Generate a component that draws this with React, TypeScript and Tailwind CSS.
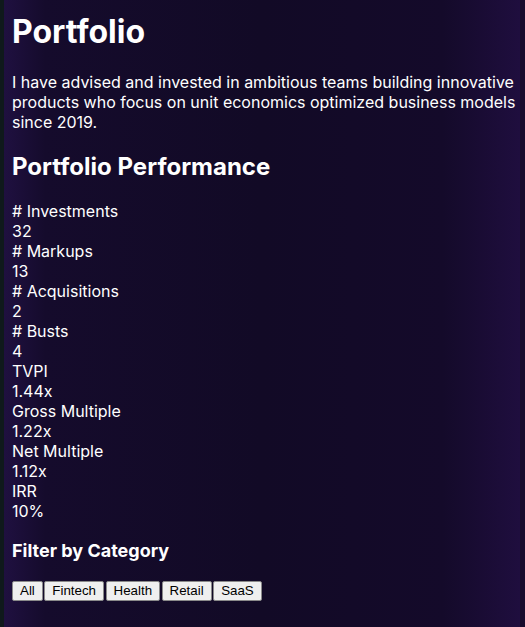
const stats = [
  { label: "# Investments", value: "32" },
  { label: "# Markups", value: "13" },
  { label: "# Acquisitions", value: "2" },
  { label: "# Busts", value: "4" },
  { label: "TVPI", value: "1.44x" },
  { label: "Gross Multiple", value: "1.22x" },
  { label: "Net Multiple", value: "1.12x" },
  { label: "IRR", value: "10%" },
];

const categories = ["All", "Fintech", "Health", "Retail", "SaaS"];

const App = () => {
  return (
    <div className="flex min-h-screen w-full font-['Inter',sans-serif] text-white">
      {/* LEFT EDGE */}
      <div className="w-[4px] shrink-0 bg-[#0f191c]" />
      {/* MAIN */}
      <div className="flex-1 bg-[linear-gradient(to_right,#1f1040,#150b2c_8%,#120a26_50%,#140a2a_85%,#1f0e3e)] pl-[8px] pr-[4px] pt-[13px] pb-6">
        <h1 className="text-[32px] font-bold leading-[1.21]">Portfolio</h1>
        <p className="mt-[20px] text-[16px] leading-[20px]">
          I have advised and invested in ambitious teams building innovative
          products who focus on unit economics optimized business models
          since 2019.
        </p>

        <h2 className="mt-[20px] text-[24px] font-bold leading-[1.21]">
          Portfolio Performance
        </h2>

        {/* STATS */}
        <div className="mt-[20px] flex flex-col text-[16px] leading-[20px]">
          {stats.map((s) => (
            <div key={s.label}>
              <div>{s.label}</div>
              <div>{s.value}</div>
            </div>
          ))}
        </div>

        <h3 className="mt-[19px] text-[18px] font-bold leading-[1.21]">
          Filter by Category
        </h3>

        {/* FILTER BUTTONS */}
        <div className="mt-[19px] flex gap-[1.5px]">
          {categories.map((c) => (
            <button
              key={c}
              className="h-[20px] rounded-[2px] border border-[#8a8a8a] bg-[#efefef] px-[7px] font-['Liberation_Sans',Arial,sans-serif] text-[13.33px] leading-[16px] text-black"
            >
              {c}
            </button>
          ))}
        </div>
      </div>
      {/* RIGHT EDGE */}
      <div className="w-[5px] shrink-0 bg-[#170b2c]" />
    </div>
  );
};

export default App;
